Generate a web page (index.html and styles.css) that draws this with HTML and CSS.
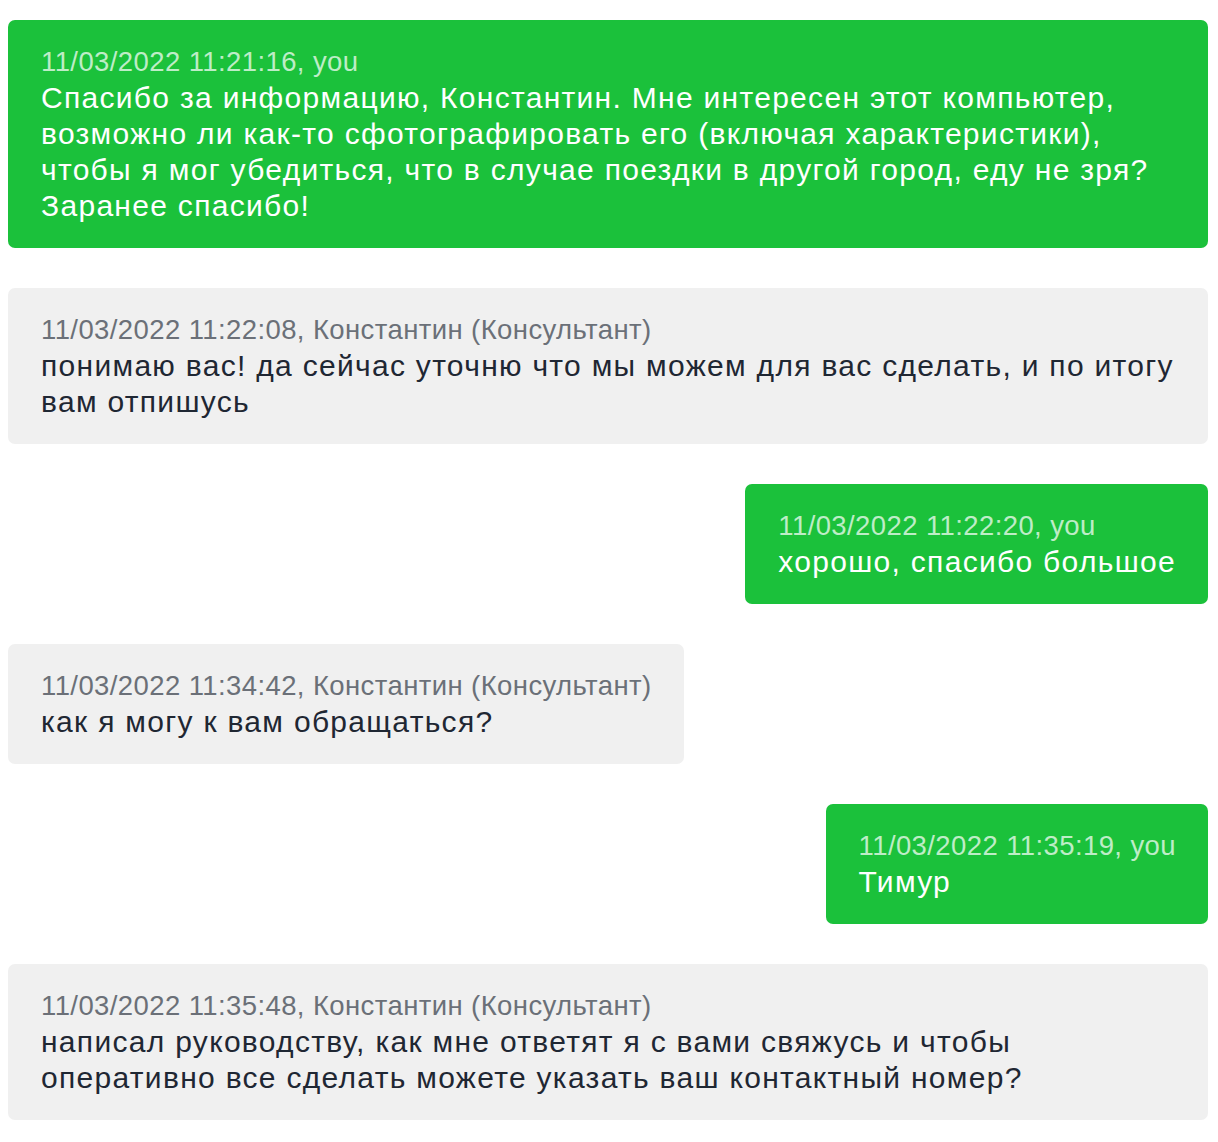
FILE: index.html
```html
<!DOCTYPE html>
<html lang="ru">
<head>
<meta charset="utf-8">
<title>Chat</title>
<link rel="stylesheet" href="styles.css">
</head>
<body>
<div class="chat">
  <div class="msg msg-you">
    <div class="meta">11/03/2022 11:21:16, you</div>
    <div class="text">Спасибо за информацию, Константин. Мне интересен этот компьютер, возможно ли как-то сфотографировать его (включая характеристики), чтобы я мог убедиться, что в случае поездки в другой город, еду не зря? Заранее спасибо!</div>
  </div>
  <div class="msg msg-them">
    <div class="meta">11/03/2022 11:22:08, Константин (Консультант)</div>
    <div class="text">понимаю вас! да сейчас уточню что мы можем для вас сделать, и по итогу вам отпишусь</div>
  </div>
  <div class="msg msg-you">
    <div class="meta">11/03/2022 11:22:20, you</div>
    <div class="text">хорошо, спасибо большое</div>
  </div>
  <div class="msg msg-them">
    <div class="meta">11/03/2022 11:34:42, Константин (Консультант)</div>
    <div class="text">как я могу к вам обращаться?</div>
  </div>
  <div class="msg msg-you">
    <div class="meta">11/03/2022 11:35:19, you</div>
    <div class="text">Тимур</div>
  </div>
  <div class="msg msg-them">
    <div class="meta">11/03/2022 11:35:48, Константин (Консультант)</div>
    <div class="text">написал руководству, как мне ответят я с вами свяжусь и чтобы оперативно все сделать можете указать ваш контактный номер?</div>
  </div>
</div>
</body>
</html>
```

FILE: styles.css
```css
html, body {
  background: #ffffff;
}

body {
  margin: 8px;
  font-family: "Liberation Sans", Arial, Helvetica, sans-serif;
}

.chat {
  max-width: 1200px;
  display: flex;
  flex-direction: column;
  align-items: flex-start;
  gap: 40px;
  padding-top: 12px;
}

.msg {
  box-sizing: border-box;
  max-width: 100%;
  padding: 24px 32px 24px 33px;
  border-radius: 7px;
  line-height: 36px;
}

.msg-you {
  align-self: flex-end;
  background: #1bc13b;
  color: #ffffff;
}

.msg-them {
  align-self: flex-start;
  background: #f0f0f0;
  color: #1f2733;
}

.meta {
  font-size: 27.5px;
  letter-spacing: 0.4px;
}

.text {
  font-size: 30px;
  letter-spacing: 1.3px;
}

.msg-you .meta {
  color: rgba(255, 255, 255, 0.72);
}

.msg-them .meta {
  color: #6b7078;
}
```
